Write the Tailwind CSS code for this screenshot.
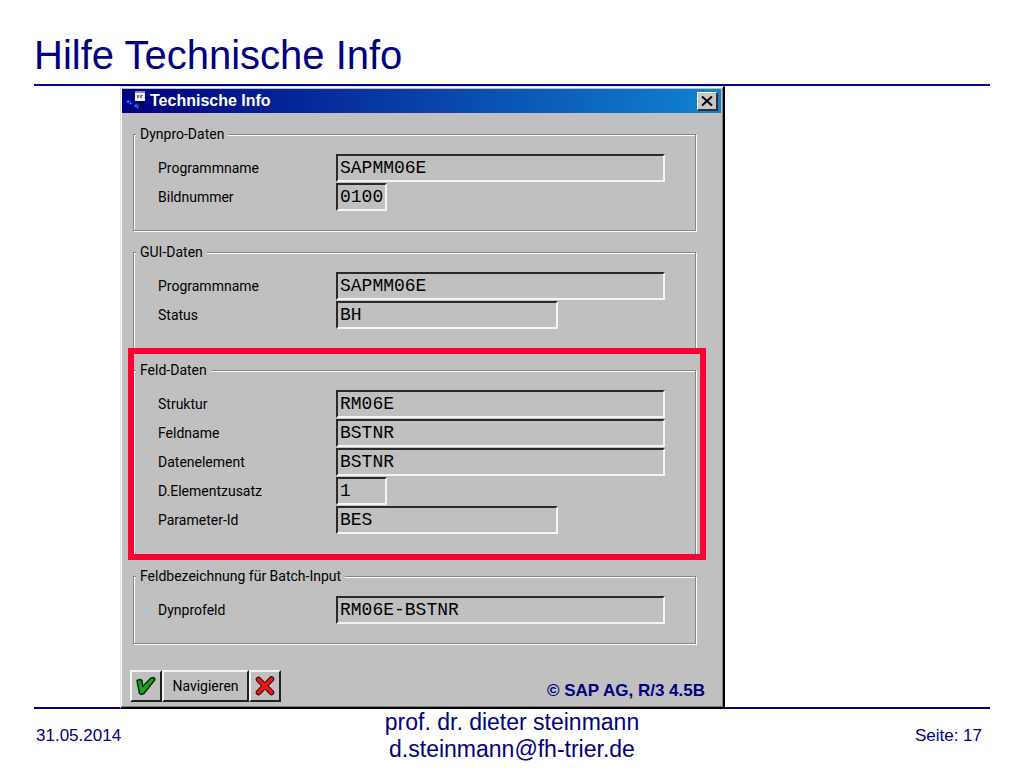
<!DOCTYPE html>
<html lang="de">
<head>
  <meta charset="UTF-8">
  <meta name="viewport" content="width=device-width, initial-scale=1.0">
  <script src="https://cdn.jsdelivr.net/npm/@tailwindcss/browser@4"></script>
  <title>Hilfe Technische Info</title>
</head>
<body class="bg-white text-[#000080] font-['Liberation_Sans',Arial,sans-serif]">
  <div class="px-[34px]">
    <header class="border-b-2 border-[#000080] pt-8 pb-1.5">
      <h1 class="text-[40px] leading-[46px]">Hilfe Technische Info</h1>
    </header>

    <main class="relative z-10 pl-[86px]">
      <!-- dialog -->
      <section class="w-full max-w-[605px] bg-[#c0c0c0] text-black border-t border-l border-[#dfdfdf] border-r-2 border-b-2 border-r-black border-b-black">
        <div class="border border-white border-r-[#808080] border-b-[#808080] pt-px pr-px">
          <div class="flex items-center h-6 pl-1 pr-[3px] bg-linear-to-r/srgb from-[#000080] to-[#1084d0]">
            <svg class="w-5 h-5 mr-1" viewBox="0 0 20 20">
              <path d="M5 11h9l5-1v3l-4 5H8z" fill="#000048"/>
              <rect x="9" y="0" width="10" height="10" fill="#f0f0f0"/>
              <rect x="9" y="0" width="10" height="2" fill="#8c8ca8"/>
              <path d="M11 4h2v3h-2zM14 4h3v1h-1v2h-2z" fill="#77778c"/>
              <path d="M0 10l3-1 4 3-2 2-4-2zM7 15l3-3 4 2-2 4-3-1z" fill="#0030f0"/>
              <path d="M1 10h2v1H1zM4 12h1v1H4zM9 14h2v1H9zM11 16h1v1h-1z" fill="#50a0ff"/>
            </svg>
            <h2 class="flex-1 text-base leading-6 font-bold text-white">Technische Info</h2>
            <button type="button" aria-label="Schließen" class="flex items-center justify-center w-[21px] h-[19px] bg-[#c8c8c8] border-t border-l border-white border-r-2 border-b-2 border-r-[#303030] border-b-[#303030]">
              <svg class="w-3 h-3" viewBox="0 0 12 12"><path d="M1 1.500l10 9M11 1.500l-10 9" stroke="#000" stroke-width="2"/></svg>
            </button>
          </div>

          <form class="pt-[11px] pl-[11px] pr-6 pb-1">
            <div class="flex flex-col gap-2.5 text-[15px]">
              <fieldset class="mr-px mb-px border border-[#868686] shadow-[1px_1px_0_#fff,inset_1px_1px_0_#fff] pt-2.5 pb-[19px] pl-6 pr-[30px]">
                <legend class="h-5 leading-5 px-1 -ml-[22px] bg-[#c0c0c0] font-[Roboto,sans-serif] text-sm">Dynpro-Daten</legend>
                <div class="flex flex-col gap-px">
                  <div class="flex items-center h-7">
                    <label for="dynpro-programm" class="w-[178px] font-[Roboto,sans-serif] text-sm">Programmname</label>
                    <input id="dynpro-programm" readonly value="SAPMM06E" class="flex-1 min-w-0 h-7 pl-0.5 border-2 border-[#f4f4f4] border-t-[#2a2a2a] border-l-[#2a2a2a] font-['Liberation_Mono',monospace] text-lg leading-6 outline-none">
                  </div>
                  <div class="flex items-center h-7">
                    <label for="dynpro-bild" class="w-[178px] font-[Roboto,sans-serif] text-sm">Bildnummer</label>
                    <input id="dynpro-bild" readonly value="0100" class="w-[51px] h-7 pl-0.5 border-2 border-[#f4f4f4] border-t-[#2a2a2a] border-l-[#2a2a2a] font-['Liberation_Mono',monospace] text-lg leading-6 outline-none">
                  </div>
                </div>
              </fieldset>

              <fieldset class="mr-px mb-px border border-[#868686] shadow-[1px_1px_0_#fff,inset_1px_1px_0_#fff] pt-2.5 pb-[19px] pl-6 pr-[30px]">
                <legend class="h-5 leading-5 px-1 -ml-[22px] bg-[#c0c0c0] font-[Roboto,sans-serif] text-sm">GUI-Daten</legend>
                <div class="flex flex-col gap-px">
                  <div class="flex items-center h-7">
                    <label for="gui-programm" class="w-[178px] font-[Roboto,sans-serif] text-sm">Programmname</label>
                    <input id="gui-programm" readonly value="SAPMM06E" class="flex-1 min-w-0 h-7 pl-0.5 border-2 border-[#f4f4f4] border-t-[#2a2a2a] border-l-[#2a2a2a] font-['Liberation_Mono',monospace] text-lg leading-6 outline-none">
                  </div>
                  <div class="flex items-center h-7">
                    <label for="gui-status" class="w-[178px] font-[Roboto,sans-serif] text-sm">Status</label>
                    <input id="gui-status" readonly value="BH" class="w-[222px] h-7 pl-0.5 border-2 border-[#f4f4f4] border-t-[#2a2a2a] border-l-[#2a2a2a] font-['Liberation_Mono',monospace] text-lg leading-6 outline-none">
                  </div>
                </div>
              </fieldset>

              <div class="relative">
                <fieldset class="mr-px mb-px border border-[#868686] shadow-[1px_1px_0_#fff,inset_1px_1px_0_#fff] pt-2.5 pb-5 pl-6 pr-[30px]">
                  <legend class="h-5 leading-5 px-1 -ml-[22px] bg-[#c0c0c0] font-[Roboto,sans-serif] text-sm">Feld-Daten</legend>
                  <div class="flex flex-col gap-px">
                    <div class="flex items-center h-7">
                      <label for="feld-struktur" class="w-[178px] font-[Roboto,sans-serif] text-sm">Struktur</label>
                      <input id="feld-struktur" readonly value="RM06E" class="flex-1 min-w-0 h-7 pl-0.5 border-2 border-[#f4f4f4] border-t-[#2a2a2a] border-l-[#2a2a2a] font-['Liberation_Mono',monospace] text-lg leading-6 outline-none">
                    </div>
                    <div class="flex items-center h-7">
                      <label for="feld-name" class="w-[178px] font-[Roboto,sans-serif] text-sm">Feldname</label>
                      <input id="feld-name" readonly value="BSTNR" class="flex-1 min-w-0 h-7 pl-0.5 border-2 border-[#f4f4f4] border-t-[#2a2a2a] border-l-[#2a2a2a] font-['Liberation_Mono',monospace] text-lg leading-6 outline-none">
                    </div>
                    <div class="flex items-center h-7">
                      <label for="feld-element" class="w-[178px] font-[Roboto,sans-serif] text-sm">Datenelement</label>
                      <input id="feld-element" readonly value="BSTNR" class="flex-1 min-w-0 h-7 pl-0.5 border-2 border-[#f4f4f4] border-t-[#2a2a2a] border-l-[#2a2a2a] font-['Liberation_Mono',monospace] text-lg leading-6 outline-none">
                    </div>
                    <div class="flex items-center h-7">
                      <label for="feld-zusatz" class="w-[178px] font-[Roboto,sans-serif] text-sm">D.Elementzusatz</label>
                      <input id="feld-zusatz" readonly value="1" class="w-[51px] h-7 pl-0.5 border-2 border-[#f4f4f4] border-t-[#2a2a2a] border-l-[#2a2a2a] font-['Liberation_Mono',monospace] text-lg leading-6 outline-none">
                    </div>
                    <div class="flex items-center h-7">
                      <label for="feld-param" class="w-[178px] font-[Roboto,sans-serif] text-sm">Parameter-Id</label>
                      <input id="feld-param" readonly value="BES" class="w-[222px] h-7 pl-0.5 border-2 border-[#f4f4f4] border-t-[#2a2a2a] border-l-[#2a2a2a] font-['Liberation_Mono',monospace] text-lg leading-6 outline-none">
                    </div>
                  </div>
                </fieldset>
                <!-- red marker around the group -->
                <div class="absolute -top-3 -left-[5px] -right-[9px] -bottom-1 border-6 border-[#ff0033] pointer-events-none"></div>
              </div>

              <fieldset class="mr-px mb-px border border-[#868686] shadow-[1px_1px_0_#fff,inset_1px_1px_0_#fff] pt-2.5 pb-[19px] pl-6 pr-[30px]">
                <legend class="h-5 leading-5 px-1 -ml-[22px] bg-[#c0c0c0] font-[Roboto,sans-serif] text-sm">Feldbezeichnung für Batch-Input</legend>
                <div class="flex items-center h-7">
                  <label for="batch-feld" class="w-[178px] font-[Roboto,sans-serif] text-sm">Dynprofeld</label>
                  <input id="batch-feld" readonly value="RM06E-BSTNR" class="flex-1 min-w-0 h-7 pl-0.5 border-2 border-[#f4f4f4] border-t-[#2a2a2a] border-l-[#2a2a2a] font-['Liberation_Mono',monospace] text-lg leading-6 outline-none">
                </div>
              </fieldset>
            </div>

            <div class="flex items-end justify-between pt-[25px] -ml-[3px] -mr-2">
              <div class="flex">
                <button type="button" aria-label="Weiter" class="flex items-center justify-center w-8 h-8 border-2 border-[#f4f4f4] border-r-[#202020] border-b-[#202020]">
                  <svg class="w-5 h-5" viewBox="0 0 20 20"><path d="M1 4.500l3-1 2 1 .5 6L15 2l3-.5 1 2L8 17.500l-3 1-1.500-1z" fill="#10a818" stroke="#082808" stroke-width="1.500" stroke-linejoin="round"/></svg>
                </button>
                <button type="button" class="h-8 w-[87px] border-2 border-[#f4f4f4] border-r-[#202020] border-b-[#202020] font-[Roboto,sans-serif] text-sm">Navigieren</button>
                <button type="button" aria-label="Abbrechen" class="flex items-center justify-center w-8 h-8 border-2 border-[#f4f4f4] border-r-[#202020] border-b-[#202020]">
                  <svg class="w-5 h-5" viewBox="0 0 20 20" stroke-linecap="round"><path d="M3.500 3.500l13 13M16.500 3L3.500 16.500" stroke="#400000" stroke-width="5.500"/><path d="M3.500 3.500l13 13M16.500 3L3.500 16.500" stroke="#e81818" stroke-width="3.500"/></svg>
                </button>
              </div>
              <p class="text-[17px] leading-[22px] font-bold text-[#000080]">© SAP AG, R/3 4.5B</p>
            </div>
          </form>
        </div>
      </section>
    </main>

    <footer class="grid grid-cols-3 items-center border-t-2 border-[#000080] -mt-0.5 px-0.5 text-[17px]">
      <time datetime="2014-05-31">31.05.2014</time>
      <p class="text-center text-[23px] leading-[27px] whitespace-nowrap">prof. dr. dieter steinmann<br>d.steinmann@fh-trier.de</p>
      <p class="text-right pr-1.5">Seite: 17</p>
    </footer>
  </div>
</body>
</html>
